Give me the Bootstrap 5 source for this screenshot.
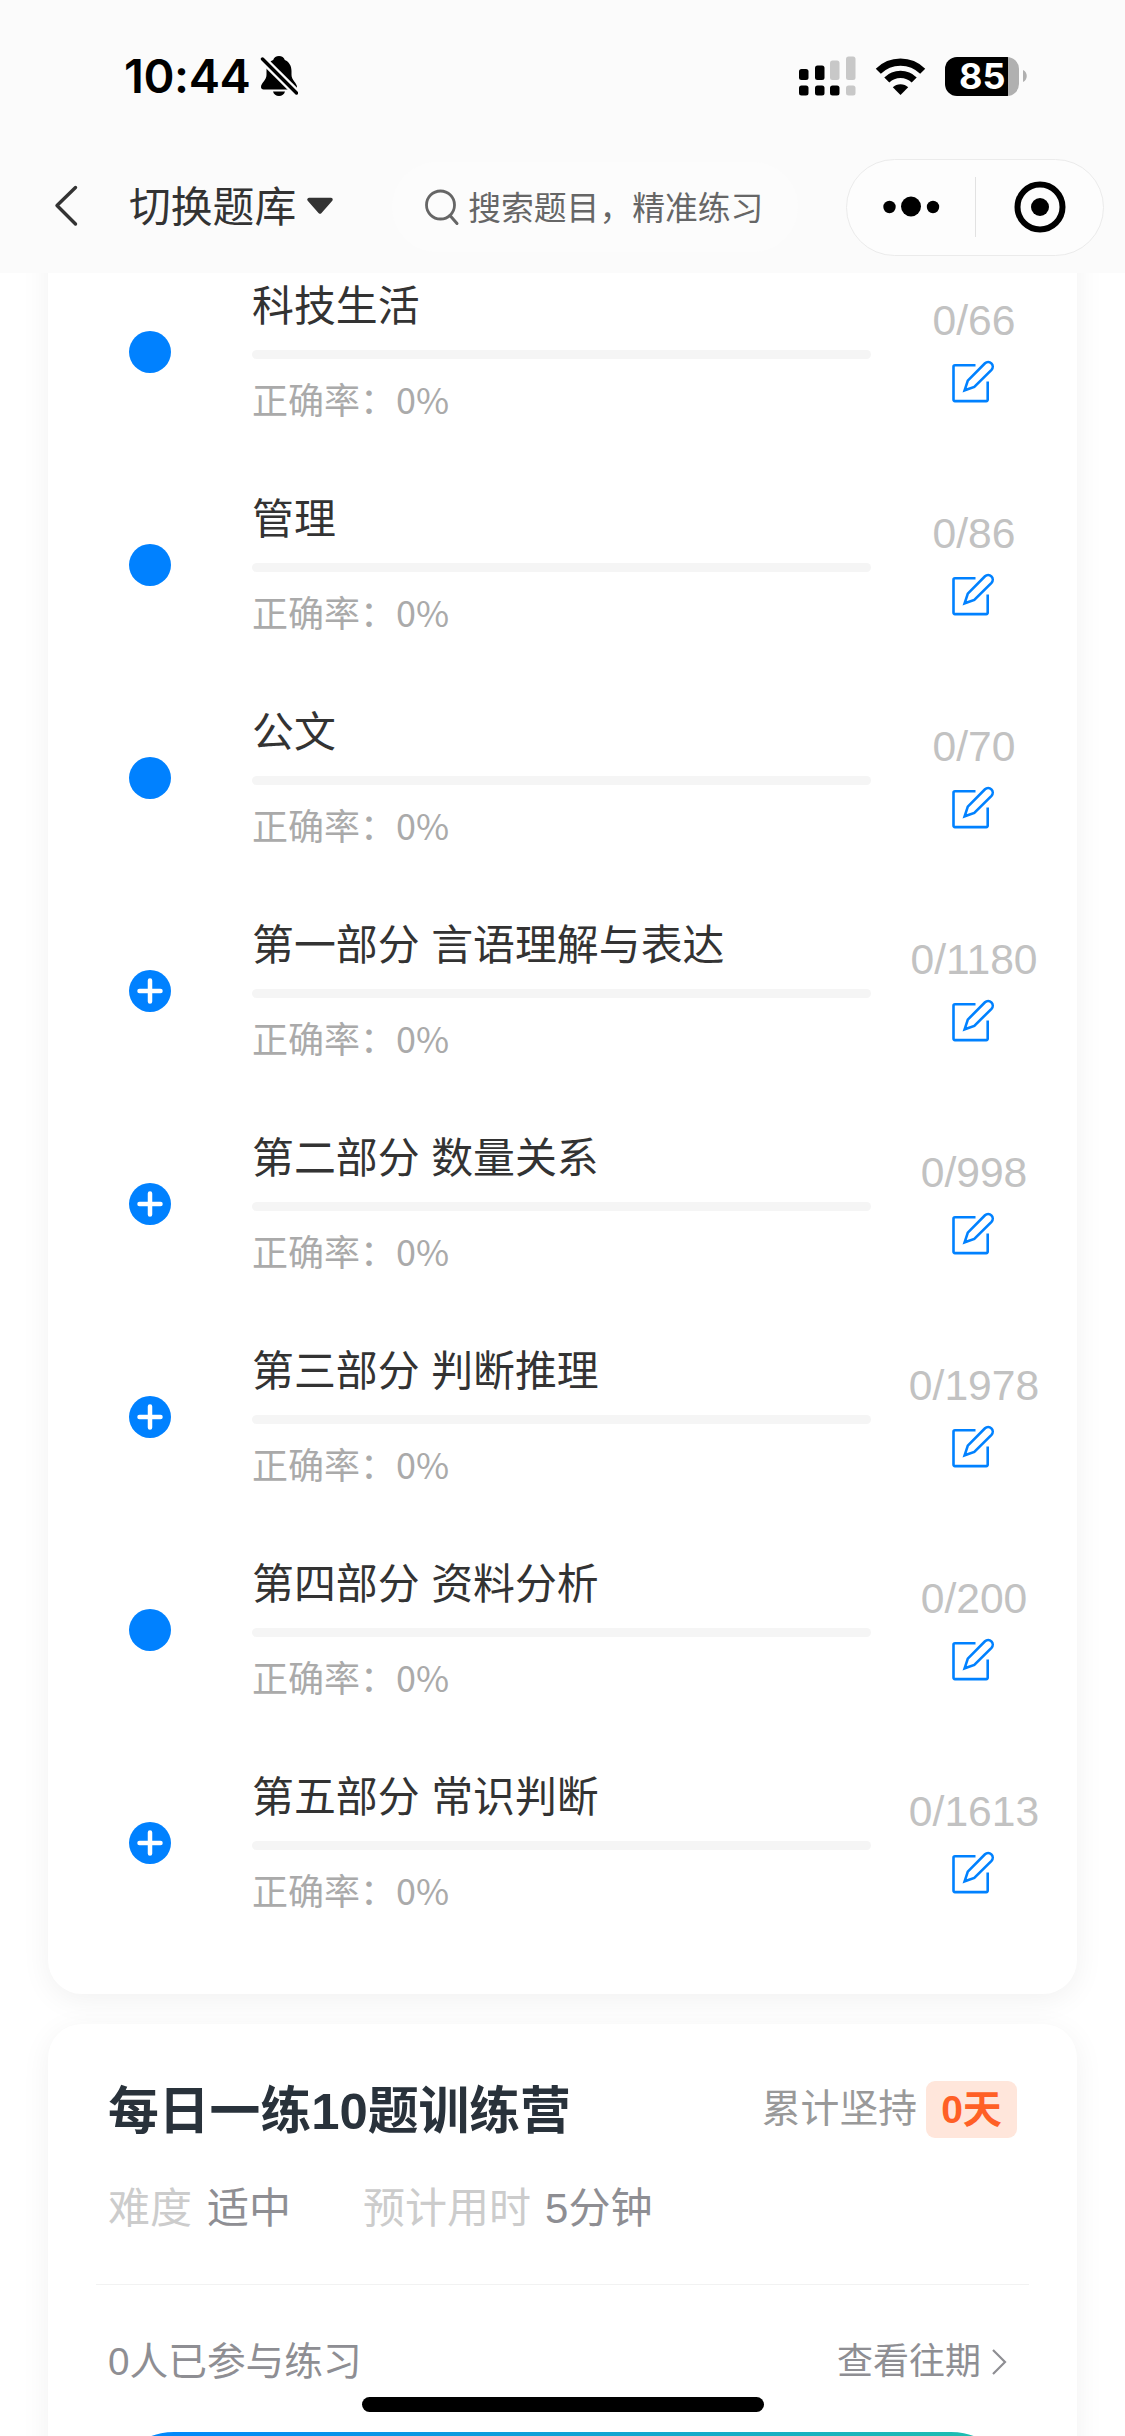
<!DOCTYPE html>
<html lang="zh-CN">
<head>
<meta charset="utf-8">
<meta name="viewport" content="width=device-width, initial-scale=1">
<title>题库练习</title>
<link href="https://cdn.jsdelivr.net/npm/bootstrap@5.3.0/dist/css/bootstrap.min.css" rel="stylesheet">
<style>
body{height:2436px;overflow:hidden;background:#fff;color:#333;font-family:"Liberation Sans","Noto Sans CJK SC",sans-serif;line-height:1}
svg{display:block;flex:none}
.top-area{height:273px;background:#fbfbfb}
.status{height:155px;padding:0 98px 3px 124px}
.clock{font:600 47px/50px Inter,sans-serif;color:#000;width:128px;white-space:nowrap;letter-spacing:-.4px}
.battery{width:74px;height:39px;border-radius:12px;background:linear-gradient(90deg,#000 63px,#b0b0b0 63px);color:#fff;font:700 36px/39px Inter,sans-serif;padding-left:14px}
.toolbar{height:104px;padding:0 21px 0 54px}
.bank{font-size:41.8px;line-height:50px;margin-left:50px;padding-top:1px}
.search-box{width:406px;height:90px;border-radius:45px;background:#fcfcfc;margin-left:58px;padding-left:32px;font-size:32.8px;color:#666}
.capsule{width:258px;height:97px;border-radius:49px;background:#fdfdfd;border:1px solid #ebebeb}
.split{width:1px;height:60px;background:#e2e2e2}
.panel{background:#fff;border-radius:34px;box-shadow:0 6px 30px rgba(0,0,0,.06);width:1029px;margin:0 auto}
.content-area{height:2163px}
.chapters{margin-top:-60px;height:1781px;padding-top:33px}
.chapter{height:213px}
.marker{width:204px;padding:85px 0 0 81px}
.body-col{width:619px;padding-top:38px}
.name{font-size:41.9px;line-height:46px;height:46px;color:#333;white-space:nowrap}
.track{height:9px;border-radius:5px;background:#f5f5f5;margin-top:20px}
.rate{font-family:"Noto Sans CJK SC",sans-serif;font-size:36px;line-height:40px;color:#aaa;margin-top:19px}
.tally{width:206px;padding-top:51px;font-size:42.6px;line-height:46px;color:#c2c2c2}
.camp{margin-top:30px;height:600px;padding-top:57px}
.camp-head{height:57px;margin:0 60px}
.camp-title{font-size:50.8px;line-height:57px;font-weight:700;color:#29323b;padding-top:4px}
.keep{font-size:38.8px;color:#999}
.days{background:#ffe6db;color:#ff6026;border-radius:9px;width:91px;height:57px;margin-left:9px;font-size:39px;font-weight:700}
.meta{font-size:42px;line-height:50px;color:#8e8e93;margin:46px 60px 0}
.meta .dim{color:#ccc}
.rule{height:1px;background:#f2f2f2;margin:50px 48px 0}
.foot{margin:55px 60px 0;height:44px;color:#8e8e93;font-size:38.7px}
.past{font-size:36px}
.start{height:132px;border-radius:66px;margin:48px 60px 0;background:linear-gradient(90deg,#0084ff,#20c0ac)}
.home-bar{position:absolute;left:362px;top:2397px;width:402px;height:15px;border-radius:8px;background:#000}
</style>
</head>
<body class="position-relative">
<svg class="d-none" aria-hidden="true">
  <symbol id="leaf" viewBox="0 0 42 42"><circle cx="21" cy="21" r="21" fill="#0081ff"/></symbol>
  <symbol id="plus" viewBox="0 0 42 42"><circle cx="21" cy="21" r="21" fill="#0081ff"/><path d="M21 10.500v21M10.500 21h21" stroke="#fff" stroke-width="4.500" stroke-linecap="round"/></symbol>
  <symbol id="edit" viewBox="0 0 44 44"><path d="M23.500 6.300H3a1.500 1.500 0 0 0-1.500 1.500v32.800A1.500 1.500 0 0 0 3 42.100h31.200a1.500 1.500 0 0 0 1.500-1.500V22.500M12.600 31.300l3.200-9.700L33 4.300a4.600 4.600 0 0 1 6.500 6.500L22.300 27.900z" fill="none" stroke="#0081ff" stroke-width="2.600"/></symbol>
</svg>

<header class="top-area">
  <div class="status d-flex align-items-center">
    <span class="clock">10:44</span>
    <svg style="margin-left:8px" width="38" height="42" viewBox="0 0 38 42"><path d="M19 1c2.800 0 5 1.600 5.800 4 4.500 2 6.700 6 6.700 11v4c0 5 5.500 8 5.500 12 0 1.500-1 2.500-2.500 2.500h-31C2 34.500 1 33.500 1 32c0-4 5.500-7 5.500-12v-4c0-5 2.200-9 6.700-11C14 2.600 16.200 1 19 1zM13 36.500h12c-.8 2.800-3 4.500-6 4.500s-5.200-1.700-6-4.500z"/><path d="M2 3.500l36 36" stroke="#fbfbfb" stroke-width="8"/><path d="M2.500 4l34 34" stroke="#000" stroke-width="3.400" stroke-linecap="round"/></svg>
    <div class="d-flex align-items-center ms-auto">
      <svg width="57" height="40" viewBox="0 0 57 40"><rect y="13" width="9.500" height="11" rx="2.500"/><rect x="16" y="9.500" width="9.500" height="14.500" rx="2.500"/><rect y="29.500" width="9.500" height="10" rx="2.500"/><rect x="16" y="29.500" width="9.500" height="10" rx="2.500"/><rect x="31" y="29.500" width="9.500" height="10" rx="2.500"/><g fill="#c8c8c8"><rect x="31" y="4.500" width="9.500" height="19.500" rx="2.500"/><rect x="47" y=".5" width="9.500" height="23.500" rx="2.500"/><rect x="47" y="29.500" width="9.500" height="10" rx="2.500"/></g></svg>
      <svg style="margin-left:19px" width="51" height="37" viewBox="0 0 51 37"><path d="M3.300 13.200a31.500 31.500 0 0 1 44.400 0M11.800 22a19.500 19.500 0 0 1 27.400 0" fill="none" stroke="#000" stroke-width="7.200"/><path d="M25.500 37l-7.700-7.700a11 11 0 0 1 15.400 0z"/></svg>
      <div class="battery" style="margin-left:19px">85</div>
      <svg style="margin-left:4px" width="4" height="12" viewBox="0 0 4 12"><path d="M0 0c5 2 5 10 0 12z" fill="#b0b0b0"/></svg>
    </div>
  </div>
  <nav class="toolbar d-flex align-items-center">
    <svg width="25" height="44" viewBox="0 0 25 44"><path d="M21.500 2.500L3 20.500l18.500 18.500" fill="none" stroke="#333" stroke-width="3.400" stroke-linecap="round" stroke-linejoin="round"/></svg>
    <span class="bank">切换题库</span>
    <svg style="margin:0 0 3px 10px" width="28" height="18" viewBox="0 0 28 18"><path d="M3 2.500h22L14 15z" fill="#333" stroke="#333" stroke-width="3.500" stroke-linejoin="round"/></svg>
    <div class="search-box d-flex align-items-center">
      <svg width="36" height="38" viewBox="0 0 36 38"><circle cx="16.500" cy="17" r="14" fill="none" stroke="#666" stroke-width="2.800"/><path d="M26 27.500l7 8" stroke="#666" stroke-width="3" stroke-linecap="round"/></svg>
      <span class="ms-2 text-nowrap pt-1">搜索题目，精准练习</span>
    </div>
    <div class="capsule d-flex align-items-center ms-auto">
      <svg style="margin-left:35px" width="58" height="22" viewBox="0 0 58 22"><circle cx="7.500" cy="11" r="6.200"/><circle cx="29" cy="10.500" r="10"/><circle cx="51" cy="11" r="6.200"/></svg>
      <span class="split" style="margin-left:35px"></span>
      <svg style="margin-left:38px" width="52" height="52" viewBox="0 0 52 52"><circle cx="26" cy="26" r="22.500" fill="none" stroke="#000" stroke-width="6"/><circle cx="26" cy="26" r="9"/></svg>
    </div>
  </nav>
</header>

<main class="content-area overflow-hidden">
  <section class="panel chapters">
    <div class="chapter d-flex">
      <div class="marker"><svg width="42" height="42"><use href="#leaf"/></svg></div>
      <div class="body-col"><div class="name">科技生活</div><div class="track"></div><div class="rate">正确率：0%</div></div>
      <div class="tally d-flex flex-column align-items-center">0/66<svg class="mt-3" width="44" height="44"><use href="#edit"/></svg></div>
    </div>
    <div class="chapter d-flex">
      <div class="marker"><svg width="42" height="42"><use href="#leaf"/></svg></div>
      <div class="body-col"><div class="name">管理</div><div class="track"></div><div class="rate">正确率：0%</div></div>
      <div class="tally d-flex flex-column align-items-center">0/86<svg class="mt-3" width="44" height="44"><use href="#edit"/></svg></div>
    </div>
    <div class="chapter d-flex">
      <div class="marker"><svg width="42" height="42"><use href="#leaf"/></svg></div>
      <div class="body-col"><div class="name">公文</div><div class="track"></div><div class="rate">正确率：0%</div></div>
      <div class="tally d-flex flex-column align-items-center">0/70<svg class="mt-3" width="44" height="44"><use href="#edit"/></svg></div>
    </div>
    <div class="chapter d-flex">
      <div class="marker"><svg width="42" height="42"><use href="#plus"/></svg></div>
      <div class="body-col"><div class="name">第一部分 言语理解与表达</div><div class="track"></div><div class="rate">正确率：0%</div></div>
      <div class="tally d-flex flex-column align-items-center">0/1180<svg class="mt-3" width="44" height="44"><use href="#edit"/></svg></div>
    </div>
    <div class="chapter d-flex">
      <div class="marker"><svg width="42" height="42"><use href="#plus"/></svg></div>
      <div class="body-col"><div class="name">第二部分 数量关系</div><div class="track"></div><div class="rate">正确率：0%</div></div>
      <div class="tally d-flex flex-column align-items-center">0/998<svg class="mt-3" width="44" height="44"><use href="#edit"/></svg></div>
    </div>
    <div class="chapter d-flex">
      <div class="marker"><svg width="42" height="42"><use href="#plus"/></svg></div>
      <div class="body-col"><div class="name">第三部分 判断推理</div><div class="track"></div><div class="rate">正确率：0%</div></div>
      <div class="tally d-flex flex-column align-items-center">0/1978<svg class="mt-3" width="44" height="44"><use href="#edit"/></svg></div>
    </div>
    <div class="chapter d-flex">
      <div class="marker"><svg width="42" height="42"><use href="#leaf"/></svg></div>
      <div class="body-col"><div class="name">第四部分 资料分析</div><div class="track"></div><div class="rate">正确率：0%</div></div>
      <div class="tally d-flex flex-column align-items-center">0/200<svg class="mt-3" width="44" height="44"><use href="#edit"/></svg></div>
    </div>
    <div class="chapter d-flex">
      <div class="marker"><svg width="42" height="42"><use href="#plus"/></svg></div>
      <div class="body-col"><div class="name">第五部分 常识判断</div><div class="track"></div><div class="rate">正确率：0%</div></div>
      <div class="tally d-flex flex-column align-items-center">0/1613<svg class="mt-3" width="44" height="44"><use href="#edit"/></svg></div>
    </div>
  </section>

  <section class="panel camp">
    <div class="camp-head d-flex align-items-center">
      <div class="camp-title">每日一练10题训练营</div>
      <span class="keep ms-auto">累计坚持</span>
      <span class="days d-flex align-items-center justify-content-center">0天</span>
    </div>
    <div class="meta d-flex">
      <span class="dim">难度</span><span style="margin-left:15px">适中</span>
      <span class="dim" style="margin-left:72px">预计用时</span><span style="margin-left:14px">5分钟</span>
    </div>
    <div class="rule"></div>
    <div class="foot d-flex align-items-center">
      <span>0人已参与练习</span>
      <span class="past ms-auto">查看往期</span>
      <svg style="margin:0 10px 0 10px" width="16" height="28" viewBox="0 0 16 28"><path d="M2 2l12 12L2 26" fill="none" stroke="#8e8e93" stroke-width="2.200"/></svg>
    </div>
    <div class="start"></div>
  </section>
</main>
<div class="home-bar"></div>
<script src="https://cdn.jsdelivr.net/npm/bootstrap@5.3.0/dist/js/bootstrap.bundle.min.js"></script>
</body>
</html>
